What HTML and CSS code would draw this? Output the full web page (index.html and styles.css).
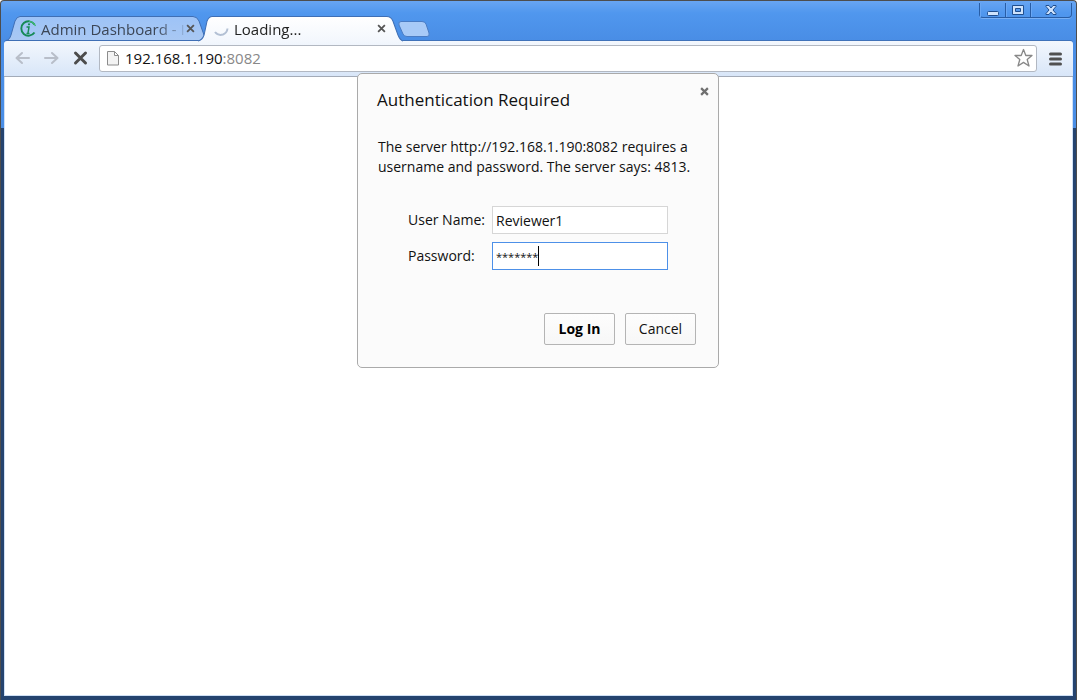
FILE: index.html
```html
<!DOCTYPE html>
<html lang="en">
<head>
<meta charset="utf-8">
<title>Loading...</title>
<link rel="stylesheet" href="styles.css">
</head>
<body>
<div class="window">
  <header class="titlebar">
    <nav class="tabs" aria-label="Tabs">
      <div class="tab">
        <svg class="tab-shape" viewBox="0 0 200 25" preserveAspectRatio="none" aria-hidden="true">
          <defs><linearGradient id="idle" x1="0" y1="0" x2="0" y2="1"><stop offset="0" stop-color="#9dc3f7"/><stop offset="1" stop-color="#a9c8f3"/></linearGradient></defs>
          <path d="M-1 24.500C2 24 3 22 4 19L8 5Q10 .5 13 .5H186Q190 .5 192 5L197 19Q199 24 202 24.500Z" fill="url(#idle)" stroke="#3f6fb5"/>
        </svg>
        <svg class="favicon" viewBox="0 0 17 17" aria-hidden="true">
          <g fill="none" stroke="#168a56"><path d="M14.500 12.500A7.200 7.200 0 1 1 14.500 4.500" stroke-width="1.900"/><path d="M6.500 7h2.500L8 13M6.500 13.500h3" stroke-width="1.500"/><path d="M9 1.300Q13.500 1.500 15.500 6" stroke="#3cb86f" stroke-width="1.300"/></g>
          <circle cx="9" cy="4.300" r="1.100" fill="#168a56"/>
        </svg>
        <span class="tab-title">Admin Dashboard - I</span>
        <button class="tab-close" aria-label="Close Admin Dashboard"><svg viewBox="0 0 8 8"><path d="M1 1l6 6M7 1l-6 6"/></svg></button>
      </div>
      <div class="tab active">
        <svg class="tab-shape" viewBox="0 0 200 25" preserveAspectRatio="none" aria-hidden="true">
          <defs><linearGradient id="current" x1="0" y1="0" x2="0" y2="1"><stop offset="0" stop-color="#ffffff"/><stop offset="1" stop-color="#f3f7fd"/></linearGradient></defs>
          <path d="M-1 25C3 24 4 22 5 19L8 5Q10 .5 13 .5H186Q190 .5 192 5L197 19Q199 24 202 25" fill="url(#current)" stroke="#3f6fb5"/>
        </svg>
        <svg class="favicon" viewBox="0 0 17 17" aria-hidden="true"><path d="M2 12q3 4 8 2.500 4-1.500 4.500-6" fill="none" stroke="#b3c0d4" stroke-width="2"/></svg>
        <span class="tab-title">Loading...</span>
        <button class="tab-close" aria-label="Close Loading"><svg viewBox="0 0 8 8"><path d="M1 1l6 6M7 1l-6 6"/></svg></button>
      </div>
      <button class="new-tab" aria-label="New tab">
        <svg viewBox="0 0 32 17"><path d="M3 .5H24Q27 .5 28 3L31 12Q32 15.500 29 15.500H9Q6 15.500 5 13L1 4Q0 .5 3 .5Z" fill="#a8caf7" stroke="#4a7cc4"/></svg>
      </button>
    </nav>
    <div class="controls">
      <button class="control" aria-label="Minimize"><svg viewBox="0 0 14 12"><rect x="1.500" y="7.500" width="11" height="4" rx="1" fill="#cfe3fc" stroke="#204f8f"/></svg></button>
      <button class="control" aria-label="Maximize"><svg viewBox="0 0 14 12"><path d="M1.500 1.500h11v9h-11zM4.500 4.500v3h5v-3z" fill="#cfe3fc" fill-rule="evenodd" stroke="#204f8f"/></svg></button>
      <button class="control wide" aria-label="Close window"><svg viewBox="0 0 14 12"><path d="M2 1.500h3l2 2.500 2-2.500h3v1L9 6l3 3.500v1H9L7 8l-2 2.500H2v-1L5 6 2 2.500z" fill="#cfe3fc" stroke="#204f8f"/></svg></button>
    </div>
  </header>
  <div class="toolbar">
    <div class="navigation">
      <button class="tool faded" aria-label="Back" disabled><svg viewBox="0 0 16 16"><path d="M8 3L2.500 8 8 13M2.500 8H15"/></svg></button>
      <button class="tool faded" aria-label="Forward" disabled><svg viewBox="0 0 16 16"><path d="M9 3l5.500 5L9 13M14.500 8H2"/></svg></button>
      <button class="tool" aria-label="Stop loading"><svg viewBox="0 0 16 16"><path class="stop" d="M3.500 3l10 10M13.500 3l-10 10"/></svg></button>
    </div>
    <div class="address">
      <svg class="page-icon" viewBox="0 0 12 16" aria-hidden="true"><path d="M.5 1.500h7l4 4v9.500H.5zM7.500 1.500v4h4" fill="#f3f3f3" stroke="#8c8c8c"/></svg>
      <span class="url">192.168.1.190<span class="port">:8082</span></span>
      <button class="star" aria-label="Bookmark this page"><svg viewBox="0 0 20 20"><path d="M10.500 1.500l2.300 6h6.200l-4.800 4 1.800 6.500-5.500-3.600L5 18l1.800-6.500-4.800-4h6.200z" fill="#fff" stroke="#888" stroke-width="1.300" stroke-linejoin="round"/></svg></button>
    </div>
    <button class="menu" aria-label="Menu"><svg viewBox="0 0 15 15"><path d="M2.500 3h10M2.500 8h10M2.500 13h10" stroke="#505050" stroke-width="3" stroke-linecap="round"/></svg></button>
  </div>
  <main class="page"></main>
  <form class="dialog" role="dialog" aria-labelledby="dialog-title">
    <button class="dialog-close" type="button" aria-label="Close"><svg viewBox="0 0 8 8"><path d="M1 1l6 6M7 1l-6 6"/></svg></button>
    <h1 class="dialog-title" id="dialog-title">Authentication Required</h1>
    <p class="message">The server http://192.168.1.190:8082 requires a username and password. The server says: 4813.</p>
    <div class="fields">
      <label for="user">User Name:</label>
      <input class="field" id="user" type="text" value="Reviewer1">
      <label for="pass">Password:</label>
      <div class="field-wrap"><input class="field current" id="pass" type="text" autocomplete="off" value="*******"><span class="caret"></span></div>
    </div>
    <div class="actions">
      <button class="action primary" type="submit">Log In</button>
      <button class="action" type="button">Cancel</button>
    </div>
  </form>
</div>
</body>
</html>
```
FILE: styles.css
```css
* { box-sizing: border-box; }
body {
  margin: 0;
  font: 14px/20px "Open Sans", "Noto Sans", sans-serif;
  color: #111;
}
button, input { font: inherit; color: inherit; margin: 0; padding: 0; }
button { background: none; border: 0; }
svg { display: block; }
.window {
  position: relative;
  display: flex;
  flex-direction: column;
  min-height: 100vh;
  padding: 2px 3px 4px;
  border: 1px solid #4d4d4d;
  border-radius: 4px 4px 0 0;
  border-bottom: 0;
  background: linear-gradient(#68a5f2 0, #5097ee 12px, #498de5 40px, #4a8ee6 127px, #25446f 127px, #25446f 100%);
}
.titlebar {
  display: flex;
  justify-content: space-between;
  height: 38px;
}
.tabs {
  position: relative;
  z-index: 1;
  display: flex;
  align-items: flex-end;
  padding-left: 3px;
}
.tab {
  position: relative;
  display: flex;
  align-items: center;
  width: 200px;
  height: 25px;
  padding: 0 10px 0 13px;
  color: #3c4656;
}
.tab.active { width: 202px; margin-left: -8px; padding-left: 14px; padding-right: 13px; color: #222; }
.tab-shape { position: absolute; inset: 0; width: 100%; height: 100%; overflow: visible; }
.favicon { position: relative; width: 17px; height: 17px; flex: none; }
.tab-title {
  position: relative;
  flex: 1;
  margin-left: 4px;
  white-space: nowrap;
  font-size: 15px;
  mask-image: linear-gradient(to right, #000 80%, rgb(0 0 0 / 20%) 98%);
}
.tab-close { position: relative; width: 14px; height: 16px; display: grid; place-items: center; }
.tab-close svg, .dialog-close svg { width: 9px; height: 9px; fill: none; stroke: #555; stroke-width: 2; }
.tab-close svg { stroke-width: 1.6; }
.new-tab { width: 32px; height: 17px; margin: 0 0 3px -3px; }
.controls {
  display: flex;
  height: 15px;
  margin-right: 1px;
  border: 1px solid #285da5;
  border-top: 0;
  border-radius: 0 0 4px 4px;
  box-shadow: 0 1px 0 #79b0f5;
}
.control { display: grid; place-items: center; width: 25px; box-shadow: inset 1px 0 0 #6aa7f4; }
.control + .control { border-left: 1px solid #285da5; }
.control.wide { width: 41px; }
.control svg { width: 14px; height: 12px; }
.toolbar {
  display: flex;
  align-items: center;
  height: 36px;
  padding: 0 10px 1px;
  border-bottom: 1px solid #a3abb8;
  border-radius: 3px 3px 0 0;
  box-shadow: 0 -1px 0 #3f72b9;
  background: linear-gradient(#f3f7fd, #d8e6f8);
}
.navigation { display: flex; gap: 13px; }
.tool { width: 16px; height: 16px; }
.tool svg { fill: none; stroke: #4c4c4c; stroke-width: 2; stroke-linejoin: round; }
.faded svg { stroke: #b8bec9; stroke-linecap: round; }
.tool .stop { stroke-width: 3; stroke-linecap: round; }
.address {
  display: flex;
  flex: 1;
  align-items: center;
  height: 27px;
  margin: 0 11px;
  padding: 0 3px 0 7px;
  border: 1px solid #b2b8c2;
  border-radius: 3px;
  background: #fff;
}
.page-icon { width: 12px; height: 16px; }
.url { flex: 1; margin-left: 6px; font-size: 15px; }
.port { color: #888; }
.star, .star svg { width: 20px; height: 20px; }
.menu, .menu svg { width: 15px; height: 15px; }
.page {
  flex: 1;
  background: #fff;
  border: solid #cfe0f5;
  border-width: 0 1px 1px;
}
.dialog {
  position: absolute;
  top: 72px;
  left: 0;
  right: 1px;
  width: 362px;
  margin: 0 auto;
  padding: 15px 22px 22px 19px;
  border: 1px solid #aaa;
  border-radius: 5px;
  background: #fbfbfb;
}
.dialog-close { position: absolute; top: 9px; right: 6px; width: 16px; height: 16px; display: grid; place-items: center; }
.dialog-close svg { stroke: #707070; }
.dialog-title { margin: 0; font-size: 17px; line-height: 22px; font-weight: 400; }
.message { margin: 26px 0 29px 1px; }
.fields {
  display: grid;
  grid-template-columns: 76px 176px;
  gap: 8px;
  align-items: center;
  margin-left: 31px;
}
.fields label { white-space: nowrap; }
.field {
  display: block;
  width: 100%;
  height: 28px;
  padding: 0 3px;
  border: 1px solid #d6d6d6;
  background: #fff;
  outline: 0;
}
.field.current { border-color: #4d90e8; font-size: 11px; }
.field-wrap { position: relative; }
.caret { position: absolute; left: 46px; top: 4px; width: 1px; height: 20px; background: #000; }
.actions { display: flex; justify-content: flex-end; gap: 10px; margin-top: 43px; }
.action {
  width: 71px;
  height: 32px;
  border: 1px solid #b4b4b4;
  border-radius: 2px;
  background: linear-gradient(#fdfdfd, #f7f7f7);
}
.action.primary { font-weight: 700; color: #000; }
```
